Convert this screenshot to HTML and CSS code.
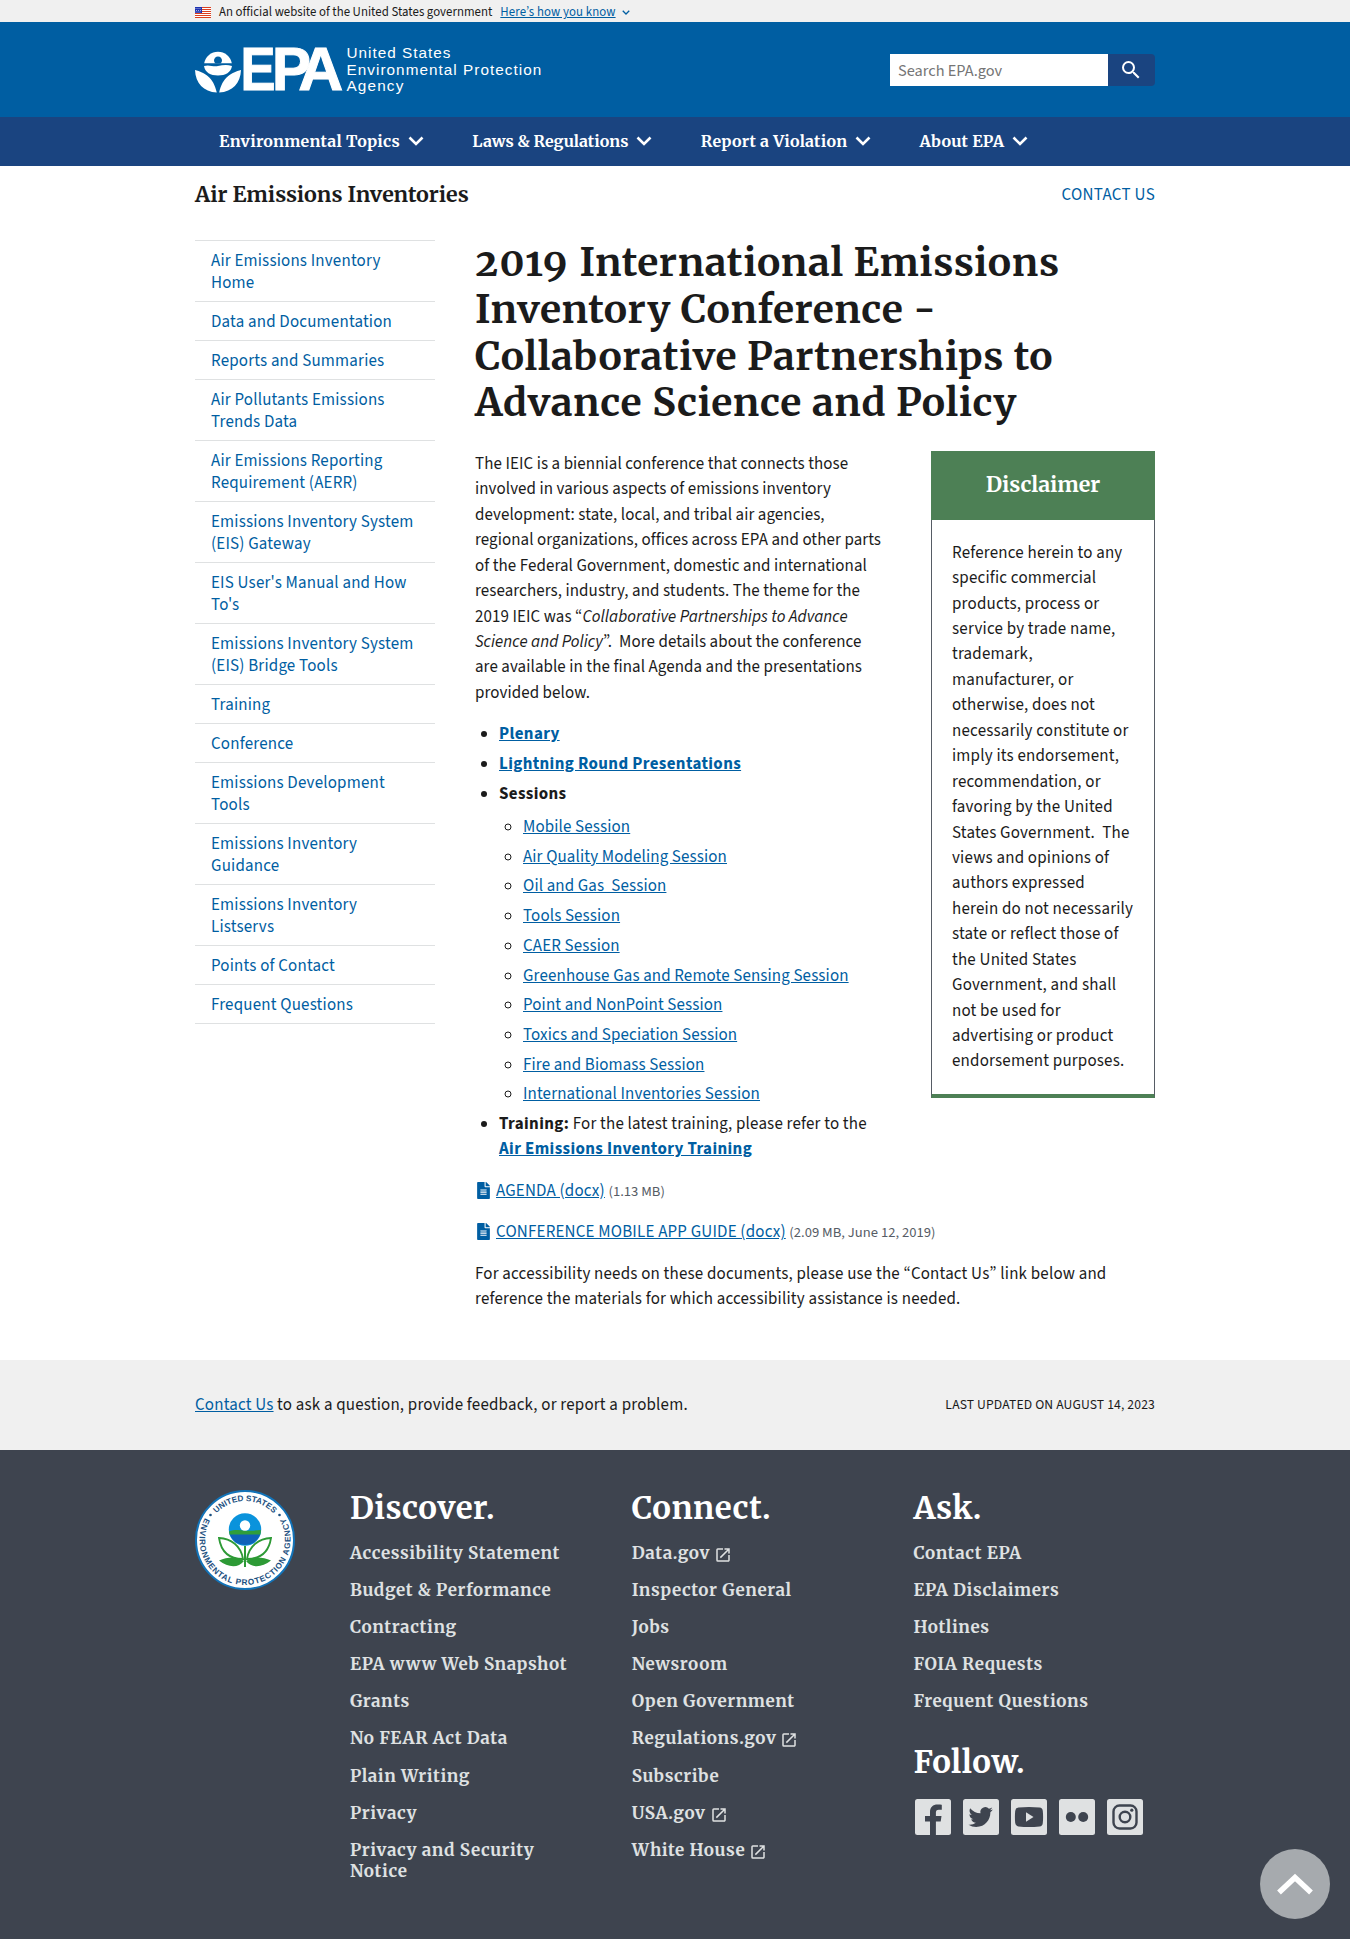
FILE: index.html
```html
<!DOCTYPE html>
<html lang="en">
<head>
<meta charset="utf-8">
<title>2019 International Emissions Inventory Conference | US EPA</title>
<link rel="stylesheet" href="styles.css">
</head>
<body>
<svg width="0" height="0" class="defs" aria-hidden="true">
  <symbol id="chev" viewBox="0 0 16 10"><path d="M1.5 1.5 8 8l6.500-6.500" fill="none" stroke="currentColor" stroke-width="2.600"/></symbol>
  <symbol id="ext" viewBox="0 0 24 24"><path fill="currentColor" d="M19 19H5V5h7V3H5a2 2 0 0 0-2 2v14a2 2 0 0 0 2 2h14c1.100 0 2-.9 2-2v-7h-2v7zM14 3v2h3.590l-9.830 9.830 1.410 1.410L19 6.410V10h2V3h-7z"/></symbol>
  <symbol id="doc" viewBox="0 0 384 512"><path fill="currentColor" d="M224 136V0H24C10.700 0 0 10.700 0 24v464c0 13.300 10.700 24 24 24h336c13.300 0 24-10.700 24-24V160H248c-13.200 0-24-10.800-24-24zm64 236c0 6.600-5.400 12-12 12H108c-6.600 0-12-5.400-12-12v-8c0-6.600 5.400-12 12-12h168c6.600 0 12 5.400 12 12v8zm0-64c0 6.600-5.400 12-12 12H108c-6.600 0-12-5.400-12-12v-8c0-6.600 5.400-12 12-12h168c6.600 0 12 5.400 12 12v8zm0-72v8c0 6.600-5.400 12-12 12H108c-6.600 0-12-5.400-12-12v-8c0-6.600 5.400-12 12-12h168c6.600 0 12 5.400 12 12zm96-114.100v6.100H256V0h6.100c6.400 0 12.500 2.500 17 7l97.900 98c4.500 4.500 7 10.600 7 16.900z"/></symbol>
</svg>

<div class="banner"><div class="wrap">
  <svg class="flag" width="16" height="11" viewBox="0 0 16 11"><rect width="16" height="11" fill="#fff"/><path d="M0 .5h16M0 2.500h16M0 4.500h16M0 6.500h16M0 8.500h16M0 10.500h16" stroke="#db3e1f"/><rect width="7" height="6" fill="#1e33b1"/><path d="M.5 1.500h6M1 3.500h6M.5 5h6" stroke="#fff" stroke-width=".6" stroke-dasharray="1 1"/></svg>
  <span>An official website of the United States government</span>
  <a href="#">Here’s how you know</a>
  <svg width="8" height="5" viewBox="0 0 16 10"><use href="#chev"/></svg>
</div></div>

<header class="header"><div class="wrap">
  <svg class="logo" width="350" height="52" viewBox="0 0 350 52" fill="#fff">
    <path d="M9.200 17.300a14 14 0 0 1 27.600 0z"/>
    <path fill="#005ea2" d="M20.500 17.600a4 4 0 1 1 5 0z"/>
    <path d="M9 20c5-1.800 9 1 14 0s9-1.600 14 0c-1 6.500-6.500 9.500-14 9.500S10 26.500 9 20z"/>
    <path d="M0 24c9.500 2.500 18.500 7 21.800 22.500C8.500 46 .5 37 0 24zM46 24c-9.500 2.500-18.500 7-21.800 22.500C37.500 46 45.500 37 46 24z"/>
    <text class="epa" y="44.300" x="45.600" textLength="35" lengthAdjust="spacingAndGlyphs">E</text>
    <text class="epa" y="44.300" x="77" textLength="39" lengthAdjust="spacingAndGlyphs">P</text>
    <text class="epa" y="44.300" x="103.300" textLength="45" lengthAdjust="spacingAndGlyphs">A</text>
    <g class="agency"><text x="151.500" y="12.300" textLength="104">United States</text><text x="151.500" y="28.700" textLength="195">Environmental Protection</text><text x="151.500" y="45" textLength="57">Agency</text></g>
  </svg>
  <form class="search"><input type="text" placeholder="Search EPA.gov"><button type="button" aria-label="Search"><svg width="24" height="24" viewBox="0 0 24 24"><path fill="#fff" d="M15.500 14h-.79l-.28-.27A6.471 6.471 0 0 0 16 9.500 6.500 6.500 0 1 0 9.500 16c1.610 0 3.090-.59 4.230-1.570l.27.28v.79l5 4.990L20.490 19l-4.990-5zm-6 0C7.010 14 5 11.990 5 9.500S7.010 5 9.500 5 14 7.010 14 9.500 11.990 14 9.500 14z"/></svg></button></form>
</div></header>

<nav class="nav"><div class="wrap">
  <a>Environmental Topics<svg width="16" height="10"><use href="#chev"/></svg></a>
  <a>Laws &amp; Regulations<svg width="16" height="10"><use href="#chev"/></svg></a>
  <a>Report a Violation<svg width="16" height="10"><use href="#chev"/></svg></a>
  <a>About EPA<svg width="16" height="10"><use href="#chev"/></svg></a>
</div></nav>

<div class="wrap site"><strong>Air Emissions Inventories</strong><a>CONTACT US</a></div>

<div class="wrap columns">
  <ul class="side">
    <li>Air Emissions Inventory Home</li><li>Data and Documentation</li><li>Reports and Summaries</li><li>Air Pollutants Emissions Trends Data</li><li>Air Emissions Reporting Requirement (AERR)</li><li>Emissions Inventory System (EIS) Gateway</li><li>EIS User's Manual and How To's</li><li>Emissions Inventory System (EIS) Bridge Tools</li><li>Training</li><li>Conference</li><li>Emissions Development Tools</li><li>Emissions Inventory Guidance</li><li>Emissions Inventory Listservs</li><li>Points of Contact</li><li>Frequent Questions</li>
  </ul>
  <main class="main">
    <h1><span class="year">2019</span> International Emissions Inventory Conference - Collaborative Partnerships to Advance Science and Policy</h1>
    <aside class="box"><h2>Disclaimer</h2><p>Reference herein to any specific commercial products, process or service by trade name, trademark, manufacturer, or otherwise, does not necessarily constitute or imply its endorsement, recommendation, or favoring by the United States Government.&nbsp; The views and opinions of authors expressed herein&nbsp;do not necessarily state or reflect those of the United States Government, and shall not be used for advertising or product endorsement purposes.</p></aside>
    <p class="intro">The IEIC is a biennial conference that connects those involved in various aspects of emissions inventory development: state, local, and tribal air agencies, regional organizations, offices across EPA and other parts of the Federal Government, domestic and international researchers, industry, and students. The theme for the 2019 IEIC was “<i>Collaborative Partnerships to Advance Science and Policy</i>”.&nbsp; More details about the conference are available in the final Agenda and the presentations provided below.</p>
    <ul class="list">
      <li><a href="#"><b>Plenary</b></a></li>
      <li><a href="#"><b>Lightning Round Presentations</b></a></li>
      <li><b>Sessions</b>
        <ul>
          <li><a href="#">Mobile Session</a></li><li><a href="#">Air Quality Modeling Session</a></li><li><a href="#">Oil and Gas&nbsp; Session</a></li><li><a href="#">Tools Session</a></li><li><a href="#">CAER Session</a></li><li><a href="#">Greenhouse Gas and Remote Sensing Session</a></li><li><a href="#">Point and NonPoint Session</a></li><li><a href="#">Toxics and Speciation Session</a></li><li><a href="#">Fire and Biomass Session</a></li><li><a href="#">International Inventories Session</a></li>
        </ul>
      </li>
      <li><b>Training:</b> For the latest training, please refer to the <a href="#"><b>Air Emissions Inventory Training</b></a></li>
    </ul>
    <p class="file"><svg width="13" height="17"><use href="#doc"/></svg><a href="#">AGENDA (docx)</a> <small>(1.13 MB)</small></p>
    <p class="file"><svg width="13" height="17"><use href="#doc"/></svg><a href="#">CONFERENCE MOBILE APP GUIDE (docx)</a> <small>(2.09 MB, June 12, 2019)</small></p>
    <p>For accessibility needs on these documents, please use the “Contact Us” link below and reference the materials for which accessibility assistance is needed.</p>
  </main>
</div>

<div class="ask"><div class="wrap"><p><a href="#">Contact Us</a> to ask a question, provide feedback, or report a problem.</p><span class="updated">LAST UPDATED ON AUGUST 14, 2023</span></div></div>

<footer class="footer"><div class="wrap">
  <svg class="seal" width="100" height="100" viewBox="0 0 100 100">
    <circle cx="50" cy="50" r="49" fill="#fff" stroke="#1273b8" stroke-width="2"/>
    <defs><path id="top" d="M11 50a39 39 0 0 1 78 0"/><path id="low" d="M12 24.500A45.500 45.500 0 1 0 88 24.500"/></defs>
    <g class="sealtext" text-anchor="middle"><text><textPath href="#top" startOffset="50%" textLength="64">UNITED STATES</textPath></text><text><textPath href="#low" startOffset="50%" textLength="188">ENVIRONMENTAL PROTECTION AGENCY</textPath></text></g>
    <circle cx="15.500" cy="25" r="1.300" fill="#1b4f80"/><circle cx="84.500" cy="25" r="1.300" fill="#1b4f80"/>
    <circle cx="50" cy="39.500" r="16.200" fill="#0a93dc"/><path d="M33.900 41.500c5-2 11-1.500 16-1 6 .5 11 0 16-.5a16.200 16.200 0 0 1-.8 5H34.800z" fill="#2f9e3a"/><path d="M34.800 44.500h30.400a16.200 16.200 0 0 1-30.400 0z" fill="#0e62b8"/><circle cx="50" cy="35.500" r="5.200" fill="#fff"/>
    <path d="M49 56h2v21h-2z" fill="#2d9a35"/>
    <path d="M48 69C33 69 26 61 24 48 36 48.500 46 56 48 69zM52 69C67 69 74 61 76 48 64 48.500 54 56 52 69z" fill="#fff" stroke="#2d9a35" stroke-width="1.800"/>
    <path d="M49 71c-7-5-16-4.500-25-.5 9 7 19 8 25 .5zM51 71c7-5 16-4.500 25-.5-9 7-19 8-25 .5z" fill="#2d9a35"/>
  </svg>
  <div class="col"><h2>Discover.</h2><ul><li>Accessibility Statement</li><li>Budget &amp; Performance</li><li>Contracting</li><li>EPA www Web Snapshot</li><li>Grants</li><li>No FEAR Act Data</li><li>Plain Writing</li><li>Privacy</li><li>Privacy and Security Notice</li></ul></div>
  <div class="col"><h2>Connect.</h2><ul><li>Data.gov<svg class="ext" width="18" height="18"><use href="#ext"/></svg></li><li>Inspector General</li><li>Jobs</li><li>Newsroom</li><li>Open Government</li><li>Regulations.gov<svg class="ext" width="18" height="18"><use href="#ext"/></svg></li><li>Subscribe</li><li>USA.gov<svg class="ext" width="18" height="18"><use href="#ext"/></svg></li><li>White House<svg class="ext" width="18" height="18"><use href="#ext"/></svg></li></ul></div>
  <div class="col"><h2>Ask.</h2><ul><li>Contact EPA</li><li>EPA Disclaimers</li><li>Hotlines</li><li>FOIA Requests</li><li>Frequent Questions</li></ul>
    <h2 class="follow">Follow.</h2>
    <div class="social">
      <svg viewBox="0 0 36 36"><rect width="36" height="36" rx="2.500"/><path class="k" d="M15 36V22.500h-5V17h5v-4c0-5 3-7.500 7.500-7.500 2 0 3.800.2 4.300.3v4.900h-3c-2.300 0-2.900 1.100-2.900 2.800V17h5.600l-.8 5.500h-4.800V36z"/></svg>
      <svg viewBox="0 0 36 36"><rect width="36" height="36" rx="2.500"/><path class="k" transform="translate(5.500 5.500) scale(1.030)" d="M23.640 4.940a9.700 9.700 0 0 1-2.790.76 4.860 4.860 0 0 0 2.130-2.690 9.700 9.700 0 0 1-3.080 1.180 4.850 4.850 0 0 0-8.260 4.420A13.770 13.770 0 0 1 1.640 3.550a4.850 4.850 0 0 0 1.500 6.480 4.830 4.830 0 0 1-2.200-.61v.06a4.850 4.850 0 0 0 3.890 4.760 4.870 4.870 0 0 1-2.190.08 4.850 4.850 0 0 0 4.530 3.370A9.730 9.730 0 0 1 0 19.700a13.730 13.730 0 0 0 7.430 2.180c8.920 0 13.800-7.390 13.800-13.800l-.02-.63a9.860 9.860 0 0 0 2.430-2.510z"/></svg>
      <svg viewBox="0 0 36 36"><rect width="36" height="36" rx="2.500"/><path class="k" d="M7.500 8.500Q18 7.300 28.500 8.500 31.500 8.800 31.800 12q.6 6 0 12-.3 3.200-3.300 3.500-10.500 1.200-21 0Q4.500 27.200 4.200 24q-.6-6 0-12 .3-3.200 3.300-3.500z"/><path d="M15 13.200v9.600l7.500-4.800z"/></svg>
      <svg viewBox="0 0 36 36"><rect width="36" height="36" rx="2.500"/><circle class="k" cx="11.800" cy="18" r="5"/><circle class="k" cx="24.200" cy="18" r="5"/></svg>
      <svg viewBox="0 0 36 36"><rect width="36" height="36" rx="2.500"/><rect class="s" x="6.500" y="6.500" width="23" height="23" rx="6"/><circle class="s" cx="18" cy="18" r="5.300"/><circle class="k" cx="24.800" cy="11.200" r="1.600"/></svg>
    </div>
  </div>
</div></footer>
<a class="top" href="#" aria-label="Back to top"><svg width="36" height="22" viewBox="0 0 36 22"><path d="M2 19.500 18 4.500l16 15" fill="none" stroke="#fff" stroke-width="5.500"/></svg></a>
</body>
</html>
```
FILE: styles.css
```css
* { box-sizing: border-box; }
body { margin: 0; background: #fff; color: #1b1b1b; font: 16.96px/25.44px "Source Sans 3", "Noto Sans CJK SC", sans-serif; letter-spacing: .19px; }
ul, h1, h2, p { margin: 0; padding: 0; }
a { color: #005ea2; }
.defs { position: absolute; }
.wrap { width: 960px; margin: 0 auto; display: flex; }
.banner { height: 22px; background: #f0f0f0; font-size: 12.8px; line-height: 22px; letter-spacing: .03px; }
.banner .wrap { align-items: center; padding-top: 1px; }
.flag { margin-right: 8px; }
.banner a { margin: 0 6px 0 8px; letter-spacing: .1px; }
.banner svg { color: #005ea2; }
.header { height: 95px; background: #005ea2; }
.header .wrap { justify-content: space-between; align-items: flex-start; }
.logo { margin-top: 24px; overflow: visible; }
.epa { font: bold 61px "Liberation Sans", Arial, sans-serif; letter-spacing: 0; stroke: #fff; stroke-width: 1; }
.agency { font: 15.300px "Liberation Sans", Arial, sans-serif; }
.search { display: flex; margin-top: 32px; }
.search input { width: 218px; height: 32px; border: 0; border-radius: 0; padding: 2px 8px 0; font: 16.3px "Source Sans 3", "Noto Sans CJK SC", sans-serif; letter-spacing: 0; }
.search button { width: 47px; height: 32px; border: 0; padding: 0 2px 0 0; border-radius: 0 4px 4px 0; background: #1a4480; display: flex; align-items: center; justify-content: center; }
.nav { height: 49px; background: #1a4480; }
.nav a { color: #fff; height: 48px; display: flex; align-items: center; gap: 8px; font: bold 16px Merriweather, "DejaVu Serif Condensed", serif; letter-spacing: .23px; }
.nav a:nth-child(1) { letter-spacing: .27px; }
.nav a:nth-child(2) { letter-spacing: 0; }
.nav .wrap { padding-left: 24px; gap: 48.300px; }
.site { height: 74px; padding-top: 14px; justify-content: space-between; }
.site strong { font: bold 21.4px/30px Merriweather, "DejaVu Serif Condensed", serif; letter-spacing: 0; }
.site a { letter-spacing: .3px; line-height: 30px; }
.columns { gap: 40px; align-items: flex-start; }
.side { width: 240px; list-style: none; line-height: 22px; color: #005ea2; border-bottom: 1px solid #dfe1e2; }
.side li { border-top: 1px solid #dfe1e2; padding: 9px 16px 7px; }
.main { width: 680px; height: 1120px; }
h1 { font: bold 39.04px/46.8px Merriweather, "DejaVu Serif Condensed", serif; font-variant-numeric: oldstyle-nums; margin-bottom: 24.800px; letter-spacing: .6px; }
.year { letter-spacing: 1.700px; }
.main > p, .list { margin-bottom: 16px; }
.main .intro { letter-spacing: .08px; }
.main i { letter-spacing: .05px; }
.box { float: right; width: 224px; margin: -1.300px 0 28px 47px; border: 1px solid #565c65; border-top: 0; border-bottom: 4px solid #4d8055; }
.box h2 { margin: 0 -1px; height: 69px; background: #4d8055; color: #fff; text-align: center; font: bold 21.4px/67px Merriweather, "DejaVu Serif Condensed", serif; letter-spacing: 0; }
.box p { padding: 21px 18px 19px 20px; letter-spacing: .2px; }
.list, .list ul { padding-left: 24px; }
.list li { margin-bottom: 4.240px; }
.list > li:last-child { margin: 0; }
.list ul { margin-top: 8px; letter-spacing: .13px; }
.list b { letter-spacing: .38px; }
.file svg { margin: 0 6px 0 2px; vertical-align: -3px; color: #005ea2; }
.file small { font-size: 14.6px; color: #565c65; letter-spacing: 0; }
.ask { background: #f0f0f0; height: 90px; }
.ask .wrap { height: 90px; padding-top: 1px; align-items: center; justify-content: space-between; }
.updated { font-size: 13.600px; letter-spacing: .15px; padding-bottom: 2px; }
.footer { background: #3e444f; color: #dfe1e2; height: 489px; }
.footer .wrap { padding-top: 40px; }
.seal { margin-right: 55px; flex: none; }
.sealtext { font: bold 8.200px "Liberation Sans", Arial, sans-serif; fill: #1b4f80; letter-spacing: 0; }
.col { width: 281.700px; flex: none; }
.col:last-child { width: 241px; }
.col h2 { font: bold 31.200px/37px Merriweather, "DejaVu Serif Condensed", serif; color: #fff; letter-spacing: .5px; }
.col ul { list-style: none; padding-top: 16px; font: bold 17px/21.100px Merriweather, "DejaVu Serif Condensed", serif; letter-spacing: .6px; }
.col li { margin-bottom: 16px; width: 225px; }
.ext { vertical-align: -3px; margin: -2px 0 -2px 4px; }
.col .follow { margin-top: 32px; }
.social { display: flex; gap: 12px; margin: 18px 0 0 2px; }
.social svg { width: 36px; height: 36px; fill: #dfe1e2; }
.social .k { fill: #3e444f; }
.social .s { fill: none; stroke: #3e444f; stroke-width: 2.400; }
.top { position: fixed; right: 20px; bottom: 20px; width: 70px; height: 70px; border-radius: 50%; background: #a6aaae; display: flex; align-items: center; justify-content: center; }
```
